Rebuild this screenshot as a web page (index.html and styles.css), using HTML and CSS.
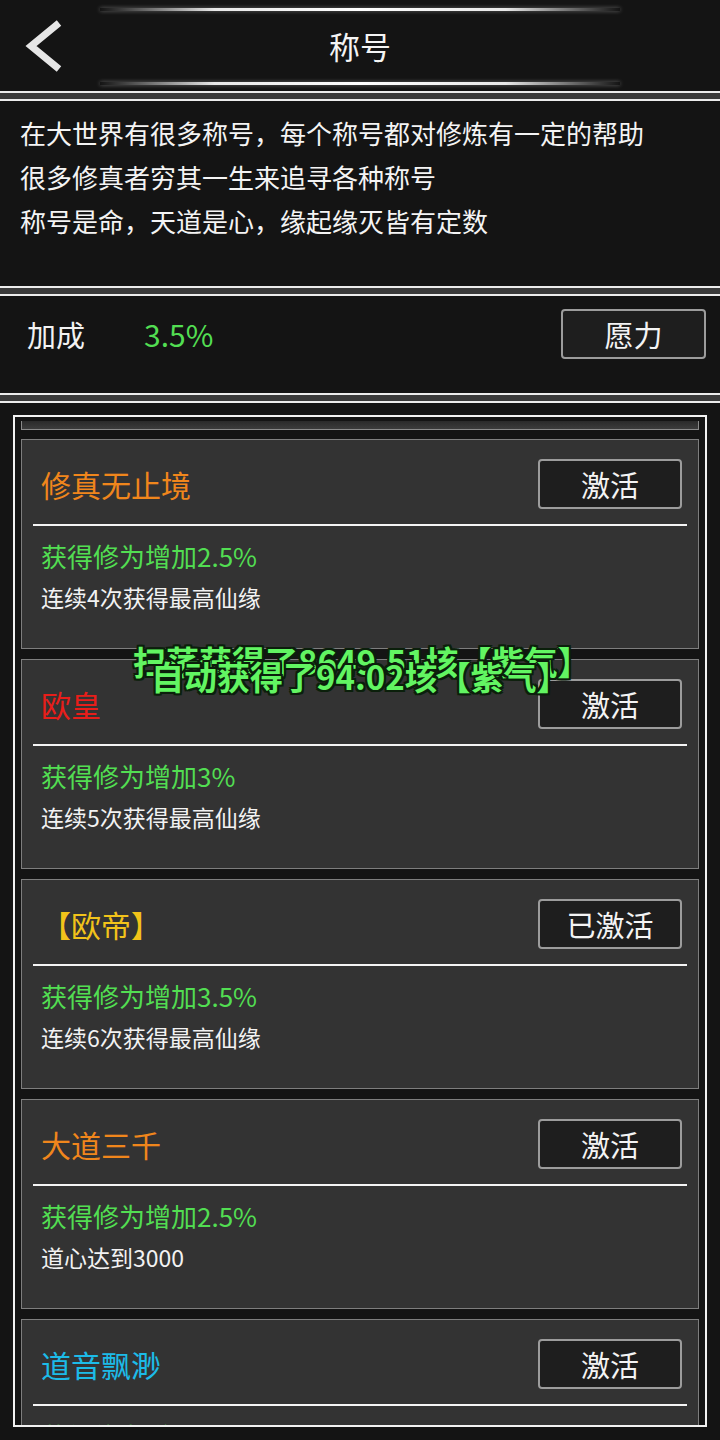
FILE: index.html
```html
<!DOCTYPE html>
<html lang="zh-CN">
<head>
<meta charset="utf-8">
<title>称号</title>
<link rel="stylesheet" href="styles.css">
</head>
<body>
<div class="page">
  <header class="header">
    <div class="glow"></div>
    <div class="title-row">
      <div class="back">
        <svg width="40" height="52" viewBox="0 0 40 52"><polyline points="37,3 9,26 37,49" fill="none" stroke="#e6e6e6" stroke-width="7" stroke-linejoin="miter" stroke-linecap="butt"/></svg>
      </div>
      <div class="title">称号</div>
      <div></div>
    </div>
    <div class="glow glow-bottom"></div>
  </header>
  <div class="sep"></div>
  <section class="intro">
    <p>在大世界有很多称号，每个称号都对修炼有一定的帮助</p>
    <p>很多修真者穷其一生来追寻各种称号</p>
    <p>称号是命，天道是心，缘起缘灭皆有定数</p>
  </section>
  <div class="sep"></div>
  <section class="bonus">
    <span class="bonus-label">加成</span>
    <span class="bonus-value">3.5%</span>
    <div class="btn btn-wide">愿力</div>
  </section>
  <div class="sep"></div>
  <section class="list-wrap">
    <div class="list">
      <div class="stub"></div>
      <div class="card">
        <div class="card-head">
          <span class="card-title orange">修真无止境</span>
          <div class="btn">激活</div>
        </div>
        <div class="divider"></div>
        <div class="effect">获得修为增加2.5%</div>
        <div class="cond">连续4次获得最高仙缘</div>
      </div>
      <div class="card">
        <div class="card-head">
          <span class="card-title red">欧皇</span>
          <div class="btn">激活</div>
        </div>
        <div class="divider"></div>
        <div class="effect">获得修为增加3%</div>
        <div class="cond">连续5次获得最高仙缘</div>
      </div>
      <div class="card">
        <div class="card-head">
          <span class="card-title gold">【欧帝】</span>
          <div class="btn">已激活</div>
        </div>
        <div class="divider"></div>
        <div class="effect">获得修为增加3.5%</div>
        <div class="cond">连续6次获得最高仙缘</div>
      </div>
      <div class="card">
        <div class="card-head">
          <span class="card-title orange">大道三千</span>
          <div class="btn">激活</div>
        </div>
        <div class="divider"></div>
        <div class="effect">获得修为增加2.5%</div>
        <div class="cond">道心达到3000</div>
      </div>
      <div class="card">
        <div class="card-head">
          <span class="card-title cyan">道音飘渺</span>
          <div class="btn">激活</div>
        </div>
        <div class="divider"></div>
        <div class="effect">获得修为增加15%</div>
        <div class="cond">道心达到5000</div>
      </div>
    </div>
  </section>
  <div class="toast toast-1">扫荡获得了8649.51垓【紫气】</div>
  <div class="toast toast-2">自动获得了94.02垓【紫气】</div>
</div>
</body>
</html>
```

FILE: styles.css
```css
* { box-sizing: border-box; }
html, body {
  margin: 0;
  padding: 0;
  background: #141414;
}
body {
  font-family: "Noto Sans CJK SC", "Noto Sans", sans-serif;
  color: #f2f2f2;
}
.page {
  position: relative;
  width: 720px;
  height: 1440px;
  overflow: hidden;
  display: flex;
  flex-direction: column;
  background: #141414;
}
p { margin: 0; }

.header {
  height: 91px;
  flex: none;
  padding-top: 8px;
  display: flex;
  flex-direction: column;
  background: #141414;
}
.glow {
  height: 3px;
  flex: none;
  margin: 0 100px;
  background: linear-gradient(90deg, rgba(255,255,255,0) 0%, rgba(255,255,255,0.9) 22%, #ffffff 50%, rgba(255,255,255,0.9) 78%, rgba(255,255,255,0) 100%);
  box-shadow: 0 0 4px rgba(255,255,255,0.35);
}
.glow-bottom { margin-top: 1px; }
.title-row {
  height: 70px;
  flex: none;
  display: grid;
  grid-template-columns: 1fr auto 1fr;
  align-items: center;
}
.back {
  padding-left: 22px;
  display: flex;
  align-items: center;
}
.back svg { display: block; }
.title {
  font-size: 31px;
  line-height: 40px;
  color: #f4f4f4;
}

.sep {
  height: 10px;
  flex: none;
  background: #3a3a3a;
  border-top: 2px solid #ececec;
  border-bottom: 2px solid #ececec;
}

.intro {
  height: 185px;
  flex: none;
  padding: 10px 20px 0;
  font-size: 26px;
  line-height: 44px;
  color: #f4f4f4;
}

.bonus {
  height: 97px;
  flex: none;
  padding: 13px 14px 0 27px;
  display: flex;
  align-items: flex-start;
}
.bonus-label {
  font-size: 29px;
  line-height: 50px;
  color: #f2f2f2;
}
.bonus-value {
  margin-left: 59px;
  font-size: 30px;
  line-height: 50px;
  color: #52de52;
}

.btn {
  margin-left: auto;
  width: 144px;
  height: 50px;
  flex: none;
  display: flex;
  align-items: center;
  justify-content: center;
  background: #1e1e1e;
  border: 2px solid #9c9c9c;
  border-radius: 4px;
  font-size: 29px;
  color: #f4f4f4;
}
.btn-wide { width: 145px; }

.list-wrap {
  flex: 1;
  min-height: 0;
  padding: 12px 13px 13px;
}
.list {
  height: 100%;
  border: 2px solid #f2f2f2;
  padding: 4px 6px 0;
  overflow: hidden;
  display: flex;
  flex-direction: column;
  gap: 10px;
}
.stub {
  height: 9px;
  flex: none;
  margin-bottom: -1px;
  background: linear-gradient(#2a2a2a, #3c3c3c);
  border: 1px solid #8a8a8a;
  border-top: none;
}
.card {
  height: 210px;
  flex: none;
  background: #333333;
  border: 1px solid #7e7e7e;
  padding: 19px 16px 0 19px;
}
.card-head {
  height: 50px;
  display: flex;
  align-items: center;
}
.card-title {
  font-size: 30px;
  line-height: 40px;
}
.orange { color: #f0861c; }
.red { color: #e81e1a; }
.gold { color: #f2c31a; }
.cyan { color: #1cbbe8; }
.divider {
  height: 2px;
  margin: 15px -5px 0 -8px;
  background: #f4f4f4;
}
.effect {
  margin-top: 13px;
  font-size: 26px;
  line-height: 34px;
  color: #52de52;
}
.cond {
  margin-top: 9px;
  font-size: 23px;
  line-height: 30px;
  color: #f2f2f2;
}

.toast {
  position: absolute;
  font-size: 33px;
  font-weight: bold;
  line-height: 36px;
  white-space: nowrap;
  color: #62f562;
  text-shadow:
    -2px -2px 0 #0b1f0b, 2px -2px 0 #0b1f0b, -2px 2px 0 #0b1f0b, 2px 2px 0 #0b1f0b,
    0 -2px 0 #0b1f0b, 0 2px 0 #0b1f0b, -2px 0 0 #0b1f0b, 2px 0 0 #0b1f0b;
}
.toast-1 { left: 133px; top: 643px; }
.toast-2 { left: 151px; top: 658px; }
```
